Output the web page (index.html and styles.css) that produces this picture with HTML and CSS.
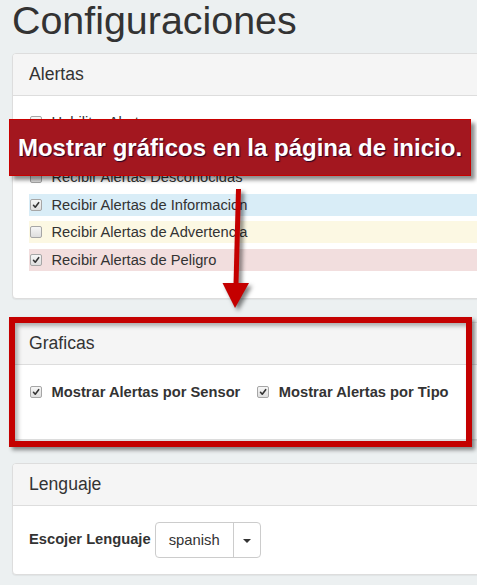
FILE: index.html
```html
<!DOCTYPE html>
<html lang="es">
<head>
<meta charset="utf-8">
<title>Configuraciones</title>
<link rel="stylesheet" href="styles.css">
</head>
<body>
<div class="page">
  <h1 class="title">Configuraciones</h1>

  <section class="panel">
    <div class="panel-heading">Alertas</div>
    <div class="panel-body alert-list">
      <div class="row"><span class="cb"></span><span>Habilitar Alertas</span></div>
      <div class="row"><span class="cb"></span><span>Recibir Alertas de Sistema</span></div>
      <div class="row"><span class="cb"></span><span>Recibir Alertas Desconocidas</span></div>
      <div class="row row-info"><span class="cb"><svg viewBox="0 0 12 12"><path d="M3 6.3 L5.1 8.6 L9.2 3.2"/></svg></span><span>Recibir Alertas de Informacion</span></div>
      <div class="row row-warning"><span class="cb"></span><span>Recibir Alertas de Advertencia</span></div>
      <div class="row row-danger"><span class="cb"><svg viewBox="0 0 12 12"><path d="M3 6.3 L5.1 8.6 L9.2 3.2"/></svg></span><span>Recibir Alertas de Peligro</span></div>
    </div>
  </section>

  <section class="panel panel-graficas">
    <div class="panel-heading">Graficas</div>
    <div class="panel-body charts">
      <label class="opt"><span class="cb"><svg viewBox="0 0 12 12"><path d="M3 6.3 L5.1 8.6 L9.2 3.2"/></svg></span><span>Mostrar Alertas por Sensor</span></label>
      <label class="opt"><span class="cb"><svg viewBox="0 0 12 12"><path d="M3 6.3 L5.1 8.6 L9.2 3.2"/></svg></span><span>Mostrar Alertas por Tipo</span></label>
    </div>
    <div class="highlight"></div>
  </section>

  <section class="panel">
    <div class="panel-heading">Lenguaje</div>
    <div class="panel-body lang">
      <span class="lang-label">Escojer Lenguaje</span>
      <div class="select">
        <span class="select-value">spanish</span>
        <span class="select-toggle"><span class="caret"></span></span>
      </div>
    </div>
  </section>
</div>

<div class="callout">Mostrar gráficos en la página de inicio.</div>

<svg class="arrow" width="477" height="585" viewBox="0 0 477 585">
  <g class="arrow-shape">
    <polygon points="236,189 241,189 238.5,285 233.5,285"/>
    <polygon points="222.5,283 249,283 235,308"/>
  </g>
</svg>
</body>
</html>
```

FILE: styles.css
```css
html, body {
  margin: 0;
  padding: 0;
  overflow: hidden;
}

body {
  background: #ecf0f1;
  font-family: "Liberation Sans", Arial, sans-serif;
  color: #333;
  width: 477px;
  height: 585px;
  position: relative;
}

.page {
  width: 560px;
  padding-left: 12px;
}

.title {
  margin: -1px 0 11px 0;
  font-size: 39.4px;
  line-height: 43px;
  font-weight: normal;
  color: #333;
}

.panel {
  position: relative;
  background: #fff;
  border: 1px solid #ddd;
  border-radius: 4px;
  margin-bottom: 23px;
  box-shadow: 0 1px 1px rgba(0, 0, 0, 0.05);
}

.panel-heading {
  background: #f5f5f5;
  border-bottom: 1px solid #ddd;
  border-radius: 3px 3px 0 0;
  height: 41px;
  line-height: 41px;
  padding-left: 16px;
  font-size: 17.6px;
}

.panel-body {
  padding-left: 16px;
  font-size: 14.7px;
}

.alert-list {
  padding-top: 15px;
  padding-bottom: 27px;
  display: flex;
  flex-direction: column;
  gap: 5.5px;
}

.row {
  height: 22px;
  display: flex;
  align-items: center;
  gap: 10px;
}

.row-info { background: #d9edf7; }
.row-warning { background: #fcf8e3; }
.row-danger { background: #f2dede; }

.cb {
  box-sizing: border-box;
  width: 12px;
  height: 12px;
  margin-left: 0.5px;
  border: 1px solid #a6a6a6;
  border-radius: 2px;
  background: linear-gradient(#f6f6f6, #dedede);
  display: inline-flex;
  flex: none;
}

.cb svg {
  width: 10px;
  height: 10px;
}

.cb path {
  fill: none;
  stroke: #333;
  stroke-width: 1.9;
  stroke-linecap: round;
  stroke-linejoin: round;
}

.charts {
  height: 74px;
  box-sizing: border-box;
  padding-top: 16px;
  display: flex;
  align-items: flex-start;
  gap: 16px;
  font-weight: bold;
}

.opt {
  height: 22px;
  display: flex;
  align-items: center;
  gap: 10px;
}

.highlight {
  position: absolute;
  left: -4px;
  top: -6px;
  width: 463px;
  height: 130px;
  box-sizing: border-box;
  border: 6px solid #c40000;
  box-shadow: 3px 3px 4px rgba(0, 0, 0, 0.45), inset 3px 3px 4px rgba(0, 0, 0, 0.3);
}

.lang {
  height: 68px;
  box-sizing: border-box;
  display: flex;
  align-items: center;
  gap: 4px;
}

.lang-label {
  font-weight: bold;
  padding-bottom: 2px;
}

.select {
  display: flex;
  height: 36px;
  box-sizing: border-box;
  border: 1px solid #ccc;
  border-radius: 4px;
  background: #fff;
}

.select-value {
  display: flex;
  align-items: center;
  padding: 0 13px 0 13px;
  width: 51px;
  border-right: 1px solid #ccc;
  font-size: 14.8px;
  padding-top: 1px;
}

.select-toggle {
  width: 26px;
  display: flex;
  align-items: center;
  justify-content: center;
}

.caret {
  width: 0;
  height: 0;
  border-top: 4px solid #333;
  border-left: 4px solid transparent;
  border-right: 4px solid transparent;
  margin-top: 2px;
}

.callout {
  position: absolute;
  left: 9px;
  top: 119px;
  width: 462px;
  height: 57px;
  box-sizing: border-box;
  background: #a3171f;
  border: 1px solid #c80000;
  box-shadow: 4px 4px 4px rgba(0, 0, 0, 0.45);
  color: #fff;
  font-weight: bold;
  font-size: 24px;
  display: flex;
  align-items: center;
  justify-content: center;
  text-shadow: 1px 1px 1px rgba(20, 0, 40, 0.85);
  white-space: nowrap;
}

.arrow {
  position: absolute;
  left: 0;
  top: 0;
  pointer-events: none;
}

.arrow-shape {
  fill: #c40000;
  filter: drop-shadow(3px 3px 2px rgba(0, 0, 0, 0.5));
}
```
